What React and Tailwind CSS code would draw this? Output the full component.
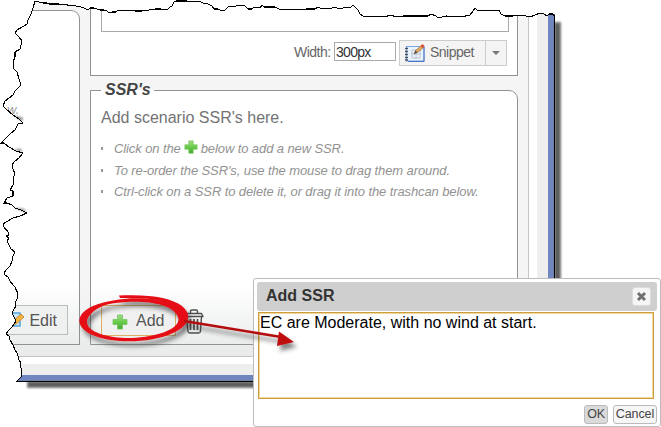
const TORN = "M35,1 L43,3 47,3 49,4 55,4 59,4 63,5 66,4 69,6 72,5 76,6 81,7 84,8 88,10 90,8 94,8 97,9 100,10 104,10 107,11 109,13 112,12 116,12 118,10 121,11 128,10 135,11 142,11 149,10 155,9 161,9 166,10 168,9 170,7 172,6 174,2 176,1 181,1 187,1 193,2 199,1 203,3 208,4 212,6 214,9 218,9 222,11 225,10 228,7 236,6 241,5 245,6 248,9 252,9 254,7 260,8 262,5 264,7 275,7 279,9 286,10 293,9 301,10 306,9 315,9 318,7 322,9 326,8 331,9 333,7 341,9 345,7 350,8 353,5 356,8 358,10 360,14 363,16 370,17 378,16 384,17 391,15 396,17 403,16 410,16 420,16 428,16 431,14 436,16 438,18 446,16 456,17 466,16 470,15 473,11 475,8 478,11 486,10 494,11 499,10 501,14 505,16 513,16 519,15 526,16 530,17 535,15 540,13 544,14 547,16 549,14 553,14 554.5,16 L554.5,381.5 L17,381.5 19,379 22,376 21,372 22,370 20,366 21,363 19,360 18,356 17,353 15,350 13,345 10,340 9,336 6,334 8,331 12,327 16,321 14,317 12,313 14,309 16,306 15,303 17,299 18,294 15,287 13,285 10,281 9,279 8,277 5,275 4,273 6,270 10,266 12,261 13,256 15,252 11,249 9,245 7,241 9,238 6,236 9,235 8,232 4,227 3,224 6,222 13,218 20,216 27,213 21,210 15,208 12,205 7,203 4,203 7,198 13,196 13,191 10,190 13,185 14,181 13,178 15,174 13,169 12,165 14,162 19,158 23,153 16,151 9,147 4,143 1,143 7,137 10,134 15,130 18,124 23,123 19,119 13,115 6,109 3,106 5,101 9,98 13,95 15,91 18,88 21,85 19,79 17,72 14,69 13,62 15,57 15,52 20,49 21,45 22,41 19,37 15,33 17,30 24,26 27,24 28,20 31,14 33,8 Z";

function Plus({ size, className }) {
  return (
    <svg width={size} height={size} viewBox="0 0 16 16" className={className}>
      <defs>
        <linearGradient id="leaf" x2="0" y2="1">
          <stop stopColor="#a2dc88" />
          <stop offset=".5" stopColor="#69ca4b" />
          <stop offset="1" stopColor="#43a833" />
        </linearGradient>
      </defs>
      <path d="M5.5 1h5v4.5H15v5h-4.5V15h-5v-4.5H1v-5h4.5z" fill="url(#leaf)" stroke="#72c65c" strokeWidth=".8" />
    </svg>
  );
}

function Notebook() {
  return (
    <svg width="22" height="20" viewBox="0 0 22 20">
      <rect x="2.5" y="3.5" width="17.5" height="14.5" fill="#e9f2fd" stroke="#7aa4de" />
      <path d="M20 4v14.5H4" fill="none" stroke="#4674c0" />
      <path d="M8 7h8v8H8zM12 6v10M7 11h10" fill="none" stroke="#bcc3cc" />
      <path d="M1 5.5h3M1 8.5h3M1 11.5h3M1 14.5h3M1 17h3" stroke="#4b5360" strokeWidth="1.3" />
      <path d="M10 11l1.5-3.5 6-5 2 2-6 5z" fill="#e8a552" stroke="#9b7a61" strokeWidth=".7" />
      <path d="M10 11l1.5-3.5 2 2z" fill="#4c4c4c" />
      <path d="M16.5 3l2-2 2 2-2 2z" fill="#dc4c2d" />
    </svg>
  );
}

function Trash() {
  return (
    <svg width="20" height="25" viewBox="0 0 20 25" fill="none" stroke="#4d4d4d" strokeWidth="1.4" strokeLinejoin="round">
      <path d="M6.5 4V2.3Q6.5 1 8 1h4q1.5 0 1.5 1.3V4M2 4.5h15.5l1.5 3H1zM2.5 8L4 22.5q.2 1.5 1.7 1.5h9q1.5 0 1.7-1.5L17.5 8" />
      <path d="M6.5 10v11M10 10v11M13.5 10v11" strokeWidth="1.7" />
    </svg>
  );
}

function Hint({ children }) {
  return (
    <li className="flex h-[21.5px] items-center whitespace-nowrap">
      <span className="mr-[11px] h-[3px] w-[2px] bg-[#999]" />
      {children}
    </li>
  );
}

export default function App() {
  return (
    <div className="relative h-[427px] w-[661px] overflow-hidden bg-white font-['Liberation_Sans',Arial,sans-serif]">
      <svg className="absolute inset-0" width="661" height="427">
        <defs>
          <filter id="soft"><feGaussianBlur stdDeviation="1.2" /></filter>
        </defs>
        <path d="M555 23h5v364H28v-5h527z" fill="#555" stroke="#777" strokeWidth="2" filter="url(#soft)" />
      </svg>

      <div className="flex h-[382px] w-[555px] border-r border-b border-black">
        <div className="flex w-full border-r-[6px] border-b-[6px] border-[#6f86c0] bg-[#eee]">
          <div className="mr-[11px] mb-[11px] flex flex-1 border-r-[8px] border-b-[7px] border-white">
            <div className="flex flex-1 gap-[10px] border-r border-b border-[#c5c5c5] bg-[linear-gradient(#f5f5f5_0,#f5f5f5_285px,#e9ebeb_356px)] pr-[10px] pb-[11px]">
              <section className="mt-[10px] flex w-[80px] shrink-0 flex-col rounded-tr-[9px] border-t border-r border-b border-[#929292] bg-[linear-gradient(#fff_0,#fff_275px,#eaecec_335px)]">
                <p className="mt-[90px] pl-[7px] text-[13px] leading-[18px] text-[#999] italic">w.</p>
                <div className="mt-auto mr-[11px] mb-[9px] flex h-[30px] items-center justify-end border border-[#bcbcbc] bg-[#eff0f0] pr-[10px] text-[16px] text-[#555]">
                  <svg className="mr-[4px] shrink-0" width="16" height="18" viewBox="0 0 16 18">
                    <path d="M0 2h11v13H0z" fill="#c9e7fa" stroke="#55a5dc" strokeWidth="1.5" />
                    <path d="M3 14l1-4 8-7 3 3-8 7z" fill="#f4b643" stroke="#c98b35" />
                  </svg>
                  <span className="relative top-px">Edit</span>
                </div>
              </section>

              <div className="flex flex-1 flex-col">
                <section className="flex h-[76px] flex-col border-r border-b border-l border-[#929292] bg-white px-[10px]">
                  <div className="mr-[-2px] h-[32px] w-[408px] shrink-0 self-start border-r border-b border-l border-[#aaa]" />
                  <div className="mt-[8px] flex h-[26px] items-center self-end text-[14px] text-[#666]">
                    <span className="mr-[4px] w-[36px] -translate-y-px whitespace-nowrap tracking-[-0.5px]">Width:</span>
                    <div className="mr-[3px] mb-[3px] h-[19px] w-[62px] border border-[#aaa] bg-white pl-[1px] text-[14px] leading-[18px] tracking-[-0.7px] text-[#333]">300px</div>
                    <div className="flex h-[26px] w-[87px] items-center border border-[#ccc] bg-[#f4f4f4] pl-[4px]">
                      <Notebook /><span className="-mt-[2px] ml-[4px] tracking-[-0.5px]">Snippet</span>
                    </div>
                    <div className="-ml-px flex h-[26px] w-[22px] items-center justify-center border border-[#ccc] bg-[#f4f4f4]">
                      <svg width="8" height="4"><path d="M0 0h8l-4 4z" fill="#777" /></svg>
                    </div>
                  </div>
                </section>

                <section className="relative mt-[14px] flex flex-1 flex-col rounded-tr-[9px] border border-[#929292] bg-[linear-gradient(#fff_0,#fff_195px,#eaecec_255px)] pl-[11px]">
                  <h2 className="absolute top-[-10px] left-[10px] bg-[linear-gradient(#f5f5f5_50%,#fff_50%)] pr-[3px] pl-[4px] text-[16px] leading-[18px] font-bold text-[#444] italic">SSR's</h2>
                  <p className="mt-[17px] -ml-px text-[16px] leading-[20px] text-[#737373]">Add scenario SSR's here.</p>
                  <ul className="mt-[10px] -ml-px text-[13px] tracking-[-0.1px] text-[#929292] italic">
                    <Hint>Click on the<Plus size="14" className="mx-[3px] -mt-[3px]" />below to add a new SSR.</Hint>
                    <Hint>To re-order the SSR's, use the mouse to drag them around.</Hint>
                    <Hint>Ctrl-click on a SSR to delete it, or drag it into the trashcan below.</Hint>
                  </ul>
                  <div className="mt-auto -ml-px mb-[8px] flex items-center">
                    <div className="flex h-[31px] w-[75px] items-center border border-[#dfb064] bg-[#f0f0f0] pl-[10px] text-[16px] text-[#555]">
                      <Plus size="16" className="mt-[2px]" /><span className="ml-[8px]">Add</span>
                    </div>
                    <div className="mt-px ml-[8px]"><Trash /></div>
                  </div>
                </section>
              </div>
            </div>
          </div>
        </div>
      </div>

      <svg className="absolute inset-0" width="661" height="427">
        <path fillRule="evenodd" fill="#fff" d={"M0 0H554.5V381.5H22V427H0Z " + TORN} />
        <path d="M554 0h4v14h-4z" fill="#fff" />
        <g fill="#777" filter="url(#soft)">
          <path d="M13 115l9 6 1-3z" />
          <path d="M13 149l9 3-1-3z" />
          <path d="M14 208l12 4-2-3z" />
        </g>
        <path d={TORN} fill="none" stroke="#000" strokeWidth="1.1" shapeRendering="crispEdges" />
      </svg>

      <div className="absolute top-[278px] left-[253px] flex h-[149px] w-[408px] flex-col rounded-[3px] border border-[#bcbcbc] bg-white px-[3px] pt-[3px]">
        <header className="flex h-[29px] shrink-0 items-center justify-between rounded-[3px] bg-[#cfcfcf] pr-[6px] pl-[9px] text-[16px] font-bold text-[#333]">
          <span className="-mt-[2px]">Add SSR</span>
          <button className="flex size-[19px] items-center justify-center rounded-[3px] border border-[#ddd] bg-[#f5f5f5]">
            <svg width="11" height="11"><path d="M2 2l7 7M9 2L2 9" stroke="#707070" strokeWidth="3" /></svg>
          </button>
        </header>
        <div className="mt-[1px] ml-[1px] h-[87px] w-[396px] shrink-0 border border-[#cc9e3c] bg-white pt-px pl-[1px] text-[16px] leading-[18px] text-black shadow-[inset_0_0_0_1px_#f2d69b]">EC are Moderate, with no wind at start.</div>
        <footer className="mt-[6px] flex justify-end gap-[5px] text-[12.5px] leading-[17px] text-[#444]">
          <button className="h-[19px] w-[24px] rounded-[3px] border border-[#bbb] bg-[#dadada] tracking-[-0.2px]">OK</button>
          <button className="h-[19px] w-[44px] rounded-[3px] border border-[#bbb] bg-[#f6f6f6] tracking-[-0.1px]">Cancel</button>
        </footer>
      </div>

      <svg className="absolute inset-0" width="661" height="427">
        <defs>
          <filter id="fall" x="-20%" y="-20%" width="150%" height="160%"><feDropShadow dx="3" dy="5" stdDeviation="2" floodColor="#333" floodOpacity=".6" /></filter>
        </defs>
        <g filter="url(#fall)">
          <path fillRule="evenodd" fill="#e50912" d="M119 295.5C151 294 171 298 182 306C194 316 187 327 173 333C152 343 115 344 95 336C74 328 75 314 93 306C113 298 143 296 165 302C148 297 136 299 120 298ZM90 315C78 329 103 338.5 132 338C160 337 185 327 177 315C171 303 140 299 112 303.5C102 305 94 310 90 315Z" />
          <path d="M184 321L281 337" stroke="#b40d10" strokeWidth="2.6" />
          <path d="M279 331.5l15 10.5-17 4z" fill="#c00d10" />
        </g>
      </svg>
    </div>
  );
}
